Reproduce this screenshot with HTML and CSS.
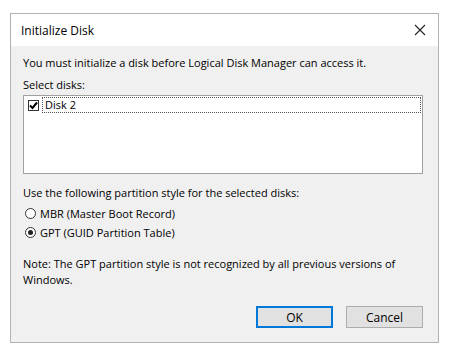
FILE: index.html
```html
<!DOCTYPE html>
<html>
<head>
<meta charset="utf-8">
<link rel="stylesheet" href="styles.css">
</head>
<body>
<div class="dialog">
  <div class="titlebar">
    <span class="title">Initialize Disk</span>
    <svg class="close" width="12" height="12" viewBox="0 0 12 12"><path d="M1 1 L11 11 M11 1 L1 11" stroke="#222" stroke-width="1.1" fill="none"/></svg>
  </div>
  <div class="content">
    <p class="intro">You must initialize a disk before Logical Disk Manager can access it.</p>
    <p class="label">Select disks:</p>
    <div class="listbox">
      <div class="row">
        <span class="check"><svg width="9" height="9" viewBox="0 0 9 9"><path d="M1 4.5 L3.5 7 L8 1.5" stroke="#000" stroke-width="2" fill="none"/></svg></span>
        <span class="item">Disk 2</span>
      </div>
    </div>
    <p class="label2">Use the following partition style for the selected disks:</p>
    <div class="radios">
      <div class="radio"><span class="dot"></span>MBR (Master Boot Record)</div>
      <div class="radio"><span class="dot on"></span>GPT (GUID Partition Table)</div>
    </div>
    <p class="note">Note: The GPT partition style is not recognized by all previous versions of Windows.</p>
    <div class="buttons">
      <button class="btn default">OK</button>
      <button class="btn">Cancel</button>
    </div>
  </div>
</div>
</body>
</html>
```
FILE: styles.css
```css
body {
  margin: 0;
  background: #ffffff;
  font-family: "Open Sans", "Noto Sans", sans-serif;
  font-size: 11px;
  color: #000;
}
.dialog {
  margin: 13px 0 0 10px;
  width: 427px;
  height: 328px;
  border: 1px solid #aeb3b8;
  background: #f0f0f0;
  display: flex;
  flex-direction: column;
}
.titlebar {
  height: 32px;
  background: #ffffff;
  display: flex;
  align-items: center;
  justify-content: space-between;
  padding: 0 10px 0 10px;
}
.title {
  font-size: 12px;
  color: #000;
}
.close {
  margin-right: 2px;
}
.content {
  padding: 0 15px 0 12px;
  display: flex;
  flex-direction: column;
  flex: 1;
}
p { margin: 0; line-height: 16px; }
.intro { margin-top: 9px; }
.label { margin-top: 6px; }
.listbox {
  margin-top: 2px;
  height: 75px;
  background: #fff;
  border: 1px solid #a0a0a0;
  padding: 1px 1px;
}
.row {
  display: flex;
  align-items: center;
  height: 16px;
}
.check {
  width: 9px;
  height: 9px;
  border: 1px solid #333;
  margin-left: 3px;
  display: flex;
  background: #fff;
}
.item {
  flex: 1;
  margin-left: 3px;
  height: 14px;
  line-height: 14px;
  border: 1px dotted #555;
  padding-left: 2px;
}
.label2 { margin-top: 11px; }
.radios {
  display: flex;
  flex-direction: column;
  gap: 3px;
  margin-top: 4px;
}
.radio {
  display: flex;
  align-items: center;
  height: 16px;
  padding-left: 2px;
}
.dot {
  width: 11px;
  height: 11px;
  border: 1px solid #333;
  border-radius: 50%;
  background: #fff;
  margin-right: 4px;
  box-sizing: border-box;
  position: relative;
}
.dot.on::after {
  content: "";
  position: absolute;
  left: 2px;
  top: 2px;
  width: 5px;
  height: 5px;
  border-radius: 50%;
  background: #222;
}
.note { margin-top: 16px; }
.buttons {
  display: flex;
  justify-content: flex-end;
  gap: 13px;
  margin-top: 18px;
}
.btn {
  width: 77px;
  height: 22px;
  font-family: inherit;
  font-size: 12px;
  background: #e1e1e1;
  border: 1px solid #adadad;
  padding: 0;
  color: #000;
}
.btn.default {
  border: 2px solid #0078d7;
}
```
